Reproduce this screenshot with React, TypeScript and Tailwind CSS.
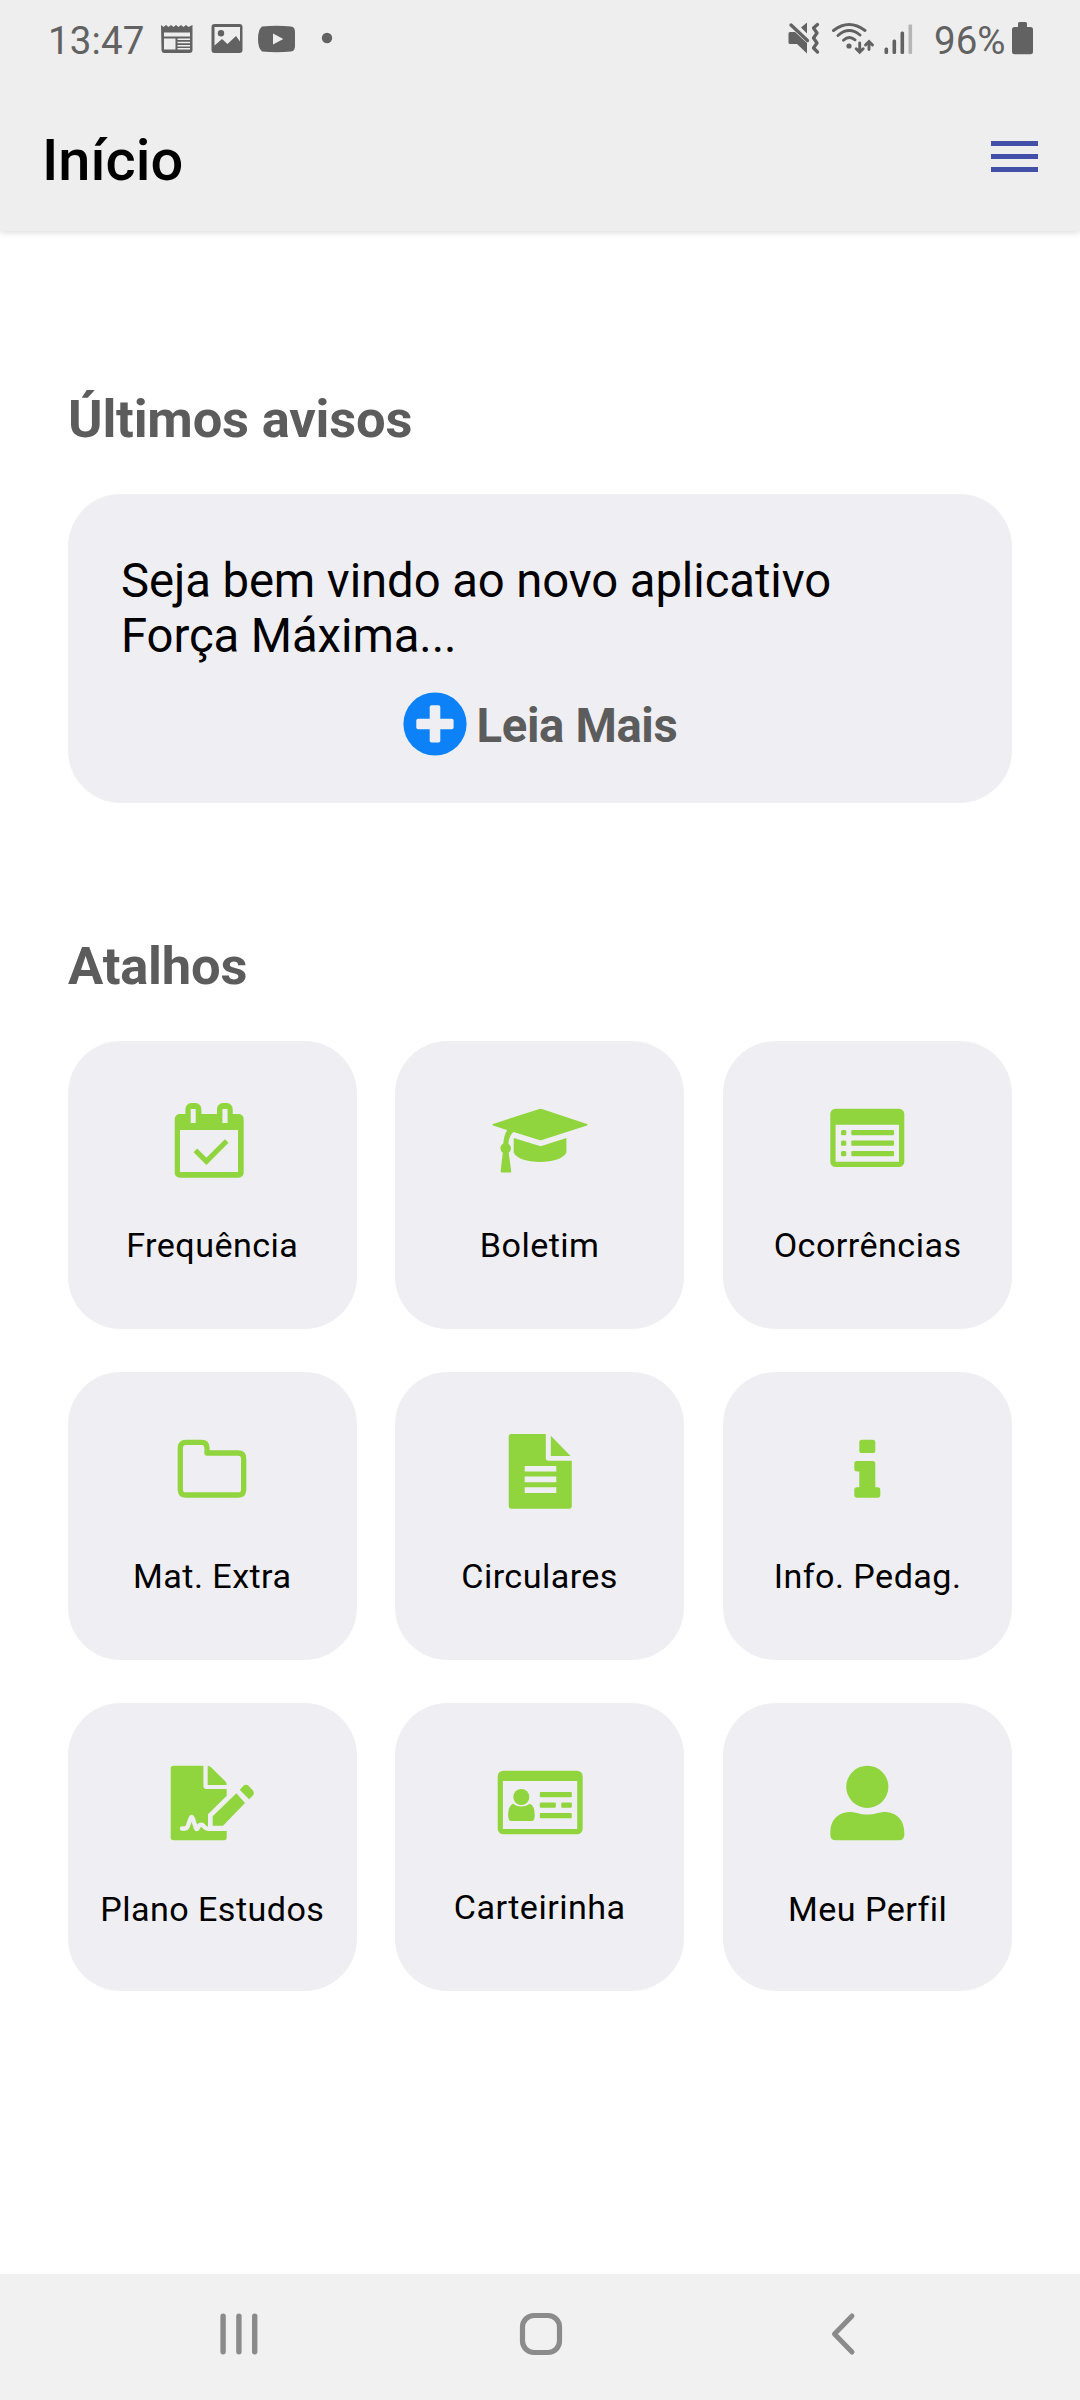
import type { ReactNode } from "react";

const shortcuts: { name: string; icon: ReactNode; low?: boolean }[] = [
  { name: "Frequência", icon: <CalendarIcon /> },
  { name: "Boletim", icon: <GraduationIcon /> },
  { name: "Ocorrências", icon: <ListIcon /> },
  { name: "Mat. Extra", icon: <FolderIcon /> },
  { name: "Circulares", icon: <FileIcon /> },
  { name: "Info. Pedag.", icon: <InfoIcon /> },
  { name: "Plano Estudos", icon: <SignatureIcon />, low: true },
  { name: "Carteirinha", icon: <IdCardIcon /> },
  { name: "Meu Perfil", icon: <UserIcon />, low: true },
];

function TileIcon({ children }: { children: ReactNode }) {
  return (
    <svg
      viewBox="0 0 100 80"
      className="h-[80px] w-[100px] shrink-0 text-[#90d43e]"
      fill="currentColor"
    >
      {children}
    </svg>
  );
}

function CalendarIcon() {
  return (
    <TileIcon>
      <path
        fillRule="evenodd"
        d="M17.7 12H23.4V7.5a6 6 0 0 1 6-6.5h4a6 6 0 0 1 6 6.5V12H55V7.5a6 6 0 0 1 6-6.5h3.7a6 6 0 0 1 6 6.5V12h6a5 5 0 0 1 5 5v53.7a5 5 0 0 1-5 5h-59a5 5 0 0 1-5-5V17a5 5 0 0 1 5-5ZM18 28v42h58V28ZM28.7 7v14h5V7ZM60.4 7v14h5.2V7Z"
      />
      <path
        d="m33.4 48.3 11 11L64.7 39"
        fill="none"
        stroke="currentColor"
        strokeWidth="5.2"
      />
    </TileIcon>
  );
}

function GraduationIcon() {
  return (
    <TileIcon>
      <path d="M3 21.9 49.3 7a5 5 0 0 1 2.6 0L97 21.9a.9.9 0 0 1 0 1.7L51.9 38a5 5 0 0 1-2.6 0L3 23.6a.9.9 0 0 1 0-1.7Z" />
      <path d="M23.7 36 50.7 44.2 76.4 36V50.5C73.5 56.5 63 60 50 60S26.5 56.5 23.7 50.5Z" />
      <path d="M17.5 27.5 24 29.5C20.5 32 18.9 36 18.5 41.7a5.4 5.4 0 0 1 .2 9L21.2 69.5q0 .9-.9.9H11.5q-.9 0-.9-.9L12.8 50.7a5.4 5.4 0 0 1 .5-9.2C13.8 36 15 31 17.5 27.5Z" />
    </TileIcon>
  );
}

function ListIcon() {
  return (
    <TileIcon>
      <path
        fillRule="evenodd"
        d="M17.5 6.7H81a5.3 5.3 0 0 1 5.3 5.3V59.7A5.3 5.3 0 0 1 81 65H17.6a5.3 5.3 0 0 1-5.3-5.3V12a5.3 5.3 0 0 1 5.2-5.3ZM17.6 22.7v37H81v-37Z"
      />
      <rect x="23" y="28" width="5.3" height="5.2" rx="1.5" />
      <rect x="23" y="38.6" width="5.3" height="5.2" rx="1.5" />
      <rect x="23" y="49.1" width="5.3" height="5.2" rx="1.5" />
      <rect x="33.3" y="28" width="42.7" height="5.2" rx="1" />
      <rect x="33.3" y="38.6" width="42.7" height="5.2" rx="1" />
      <rect x="33.3" y="49.1" width="42.7" height="5.2" rx="1" />
    </TileIcon>
  );
}

function FolderIcon() {
  return (
    <TileIcon>
      <path
        d="M23.8 9.3H39.5Q45 9.3 45 15V20H76Q81.7 20 81.7 25.7V56.4Q81.7 62 76 62H23.9Q18.3 62 18.3 56.4V15Q18.3 9.3 23.8 9.3Z"
        fill="none"
        stroke="currentColor"
        strokeWidth="5.3"
        strokeLinejoin="round"
      />
    </TileIcon>
  );
}

function FileIcon() {
  return (
    <TileIcon>
      <path
        fillRule="evenodd"
        d="M21.3 1H55.8V24.5Q55.8 27.7 59 27.7H81.8V73Q81.8 75.7 79.2 75.7H21.3Q18.7 75.7 18.7 73V3.6Q18.7 1 21.3 1ZM34.7 33v5.6H66.3V33ZM34.7 43.6v5.6H66.3v-5.6ZM34.7 54.3v5.6H66.3v-5.6Z"
      />
      <path d="M60.8 2.7 80.6 23H60.8Z" />
    </TileIcon>
  );
}

function InfoIcon() {
  return (
    <TileIcon>
      <rect x="41.3" y="6.7" width="16" height="13.3" rx="2.6" />
      <path d="M38.9 28H54.7Q57.3 28 57.3 30.6V54.3H59.7Q62.3 54.3 62.3 57V62Q62.3 64.7 59.7 64.7H38.9Q36.3 64.7 36.3 62V57Q36.3 54.3 38.9 54.3H41.3V38.4H38.9Q36.3 38.4 36.3 35.7V30.6Q36.3 28 38.9 28Z" />
    </TileIcon>
  );
}

function SignatureIcon() {
  return (
    <TileIcon>
      <path d="M11.5 1.7H41.4V21.7Q41.4 25 44.5 25H64.7V31.7L46 50.2V67H64.7V73.5Q64.7 76.3 62 76.3H11.5Q8.7 76.3 8.7 73.5V4.5Q8.7 1.7 11.5 1.7Z" />
      <path d="M45.7 1.7Q47.5 1.7 49 3.2L63.5 17.5Q64.7 18.9 64.7 21H45.7Z" />
      <path
        d="M20 64.5H23Q25.3 64.3 26.2 61L28.5 54.5Q29.7 51.5 30.8 54.5L34 64.3Q34.7 65.8 35.8 64L36.8 62Q38.5 60 40.5 61L43 63.5Q44.3 64.8 47 64.8H65"
        fill="none"
        stroke="#efeff3"
        strokeWidth="4.4"
        strokeLinecap="round"
        strokeLinejoin="round"
      />
      <path d="M74.4 29.3 83 39 61 61.7H50.7V52.3Z" />
      <path d="M77.7 25.7 81.3 22Q84 19.7 86.7 22L90.7 26.2Q93 29 90.7 31.7L87 35.2Z" />
    </TileIcon>
  );
}

function IdCardIcon() {
  return (
    <TileIcon>
      <path
        fillRule="evenodd"
        d="M13.5 6.7H87a5.7 5.7 0 0 1 5.7 5.7V64.6a5.7 5.7 0 0 1-5.7 5.7H13.4a5.7 5.7 0 0 1-5.7-5.7V12.4a5.7 5.7 0 0 1 5.8-5.7ZM12.9 17V65H87.2V17Z"
      />
      <circle cx="31.3" cy="33" r="8" />
      <path d="M23 39.7Q26.5 42.5 31.3 42.5T40 39.7Q44.7 41.5 44.7 51.5Q44.7 57 41.5 57H21.4Q18.2 57 18.2 51.5Q18.2 41.5 23 39.7Z" />
      <rect x="49.8" y="28" width="32" height="5.2" rx="1" />
      <rect x="49.8" y="38.5" width="16" height="5.2" rx="1" />
      <rect x="71.2" y="38.5" width="10.6" height="5.2" rx="1" />
      <rect x="49.8" y="49.1" width="32" height="5.2" rx="1" />
    </TileIcon>
  );
}

function UserIcon() {
  return (
    <TileIcon>
      <circle cx="49.3" cy="22.8" r="21.1" />
      <path d="M30.5 48C37 47.5 41 50.6 49.3 50.6S62 47.5 68 48C80 49 86.3 57 86.3 69V71Q86.3 76.3 80.5 76.3H18Q12.3 76.3 12.3 71V69C12.3 57 18.5 49 30.5 48Z" />
    </TileIcon>
  );
}

function StatusBar() {
  return (
    <div className="flex h-[76px] items-start justify-between pt-[18px] pr-[46px] pl-[48px] text-[38.5px] leading-[45px] text-[#626262]">
      <div className="flex">
        <span className="w-[113px] tracking-[0.1px]">13:47</span>
        <svg viewBox="0 0 180 40" className="h-[40px] w-[180px]" fill="currentColor">
          {/* news */}
          <path
            fillRule="evenodd"
            d="M0 7 2.5 9 5 7 7.5 9 10 7 12.5 9 15 7 17.5 9 20 7 22.5 9 25 7 27.5 9 31.5 7V32a3 3 0 0 1-3 3H3.5a3 3 0 0 1-3-3ZM3 14.5V18.5H29V14.5ZM3 20.5V31.5H14.5V20.5ZM16.5 20.5v1.5H29v-1.5ZM16.5 23.7v1.5H29v-1.5ZM16.5 26.9v1.5H29v-1.5ZM16.5 30.1v1.4H29v-1.4Z"
          />
          {/* gallery */}
          <path
            fillRule="evenodd"
            d="M53.5 6H78.5a3 3 0 0 1 3 3V32a3 3 0 0 1-3 3H53.5a3 3 0 0 1-3-3V9a3 3 0 0 1 3-3ZM53.5 9V27.5L61 21 66.5 26 75 18 79 23.5V9Z"
          />
          <circle cx="60" cy="15.3" r="3.2" />
          {/* youtube */}
          <path
            fillRule="evenodd"
            d="M101 8.6Q115.5 7 130 8.6Q134 9 134 14V28Q134 33 130 33.5Q115.5 35 101 33.5Q97 30 97 21T101 8.6ZM112 15.5V26.5L122.3 21Z"
          />
          <circle cx="166" cy="20" r="5.2" />
        </svg>
      </div>
      <div className="flex">
        <svg viewBox="0 0 148 40" className="h-[40px] w-[148px]" fill="currentColor">
          {/* muted, vibrating */}
          <path d="M4 14H9L21 25V35.5L11 26H4Q2.5 26 2.5 24.5V15.5Q2.5 14 4 14ZM15 9.5 21 4.5V15.5Z" />
          <path
            d="m5 7 16.5 15.5M31.5 6.5 27.5 10 31 15 27.5 20 31 25 27.5 30 31.5 34"
            fill="none"
            stroke="currentColor"
            strokeWidth="3.3"
            strokeLinecap="round"
            strokeLinejoin="round"
          />
          {/* wifi */}
          <g fill="none" stroke="currentColor" strokeWidth="2.9" strokeLinecap="round">
            <path d="M47.5 12.5Q63 .5 79 12.5M52 17.5Q63 8 74 17M57.5 22.3Q63 17 69 21.8" />
            <path d="M73.7 25V33.5M70.2 30.8 73.7 34.2 77.2 30.8M83 31.5V24M79.5 27 83 23.5 86.5 27" />
          </g>
          <circle cx="63" cy="28" r="2.6" />
          {/* signal */}
          <rect x="98.5" y="29.5" width="3.6" height="6.5" rx="1.5" />
          <rect x="106.5" y="21.5" width="3.6" height="14.5" rx="1.5" />
          <rect x="114.5" y="13.5" width="3.6" height="22.5" rx="1.5" />
          <rect x="122.5" y="6.5" width="3.6" height="29.5" rx="1" opacity="0.4" />
        </svg>
        <span className="w-[78px]">96%</span>
        <svg viewBox="0 0 22 40" className="h-[40px] w-[22px]" fill="currentColor">
          <path d="M6 9V5.5Q6 4 7.500 4H13.500Q15 4 15 5.500V9H18.500Q21 9 21 11.500V34Q21 36.300 18.500 36.300H2.500Q0 36.300 0 34V11.500Q0 9 2.500 9Z" />
        </svg>
      </div>
    </div>
  );
}

function Header() {
  return (
    <header className="h-[231px] bg-[#eeeeee] shadow-[0_1px_7px_rgba(0,0,0,0.16)]">
      <StatusBar />
      <div className="flex items-start justify-between px-[42px]">
        <h1 className="pt-[50px] text-[57.75px] leading-[68px] font-medium text-black">
          Início
        </h1>
        <div className="flex w-[47px] flex-col gap-[8px] pt-[65px]">
          <span className="h-[5px] bg-[#4350a8]" />
          <span className="h-[5px] bg-[#4350a8]" />
          <span className="h-[5px] bg-[#4350a8]" />
        </div>
      </div>
    </header>
  );
}

function Notice() {
  return (
    <div className="mt-[44px] h-[309px] rounded-[52.5px] bg-[#efeff3] px-[53px] pt-[60px]">
      <p className="text-[47.25px] leading-[55px] tracking-[-0.08px] text-black">
        Seja bem vindo ao novo aplicativo
        <br />
        Força Máxima...
      </p>
      <div className="mt-[28px] flex items-start justify-center gap-[10px]">
        <svg viewBox="0 0 64 64" className="h-[64px] w-[64px]">
          <circle cx="32" cy="32" r="31.6" fill="#0d82f8" />
          <rect x="13.3" y="26.7" width="37.3" height="10.6" rx="1.8" fill="#efeff3" />
          <rect x="26.7" y="13.3" width="10.6" height="37.3" rx="1.8" fill="#efeff3" />
        </svg>
        <span className="pt-[7px] text-[47.25px] leading-[55px] font-bold tracking-[-0.35px] text-[#5c5c5c]">
          Leia Mais
        </span>
      </div>
    </div>
  );
}

function NavBar() {
  return (
    <nav className="flex h-[126px] items-start bg-[#f1f1f1] pt-[37px] pl-[218px] text-[#8b8b8b]">
      <svg viewBox="0 0 42 46" className="h-[46px] w-[42px]" fill="currentColor">
        <rect x="2.4" y="2.5" width="5.4" height="41" rx="2.7" />
        <rect x="18.2" y="2.5" width="5.4" height="41" rx="2.7" />
        <rect x="34" y="2.5" width="5.4" height="41" rx="2.7" />
      </svg>
      <svg viewBox="0 0 46 46" className="ml-[258px] h-[46px] w-[46px]">
        <rect x="4.5" y="4.5" width="37" height="37" rx="11.5" fill="none" stroke="currentColor" strokeWidth="5.2" />
      </svg>
      <svg viewBox="0 0 34 46" className="ml-[264px] h-[46px] w-[34px]">
        <path
          d="M24 5 6.5 23 24 41"
          fill="none"
          stroke="currentColor"
          strokeWidth="5"
          strokeLinecap="round"
          strokeLinejoin="round"
        />
      </svg>
    </nav>
  );
}

export default function App() {
  return (
    <div className="flex h-[2400px] w-[1080px] flex-col bg-white font-[Roboto,sans-serif]">
      <Header />
      <main className="flex-1 px-[68px] pt-[157px]">
        <h2 className="text-[52.5px] leading-[62px] font-bold tracking-[-0.2px] text-[#5c5c5c]">
          Últimos avisos
        </h2>
        <Notice />
        <h2 className="mt-[132px] text-[52.5px] leading-[62px] font-bold tracking-[-0.2px] text-[#5c5c5c]">
          Atalhos
        </h2>
        <div className="mt-[44px] grid grid-cols-[327.3px_328px_288.7px] gap-y-[42.6px]">
          {shortcuts.map((item) => (
            <div
              key={item.name}
              className="flex h-[288.4px] w-[288.6px] flex-col items-center rounded-[52.5px] bg-[#efeff3] pt-[61px]"
            >
              {item.icon}
              <span
                className={`text-[34.125px] leading-[40px] tracking-[0.45px] whitespace-nowrap text-black ${
                  item.low ? "mt-[45px]" : "mt-[43px]"
                }`}
              >
                {item.name}
              </span>
            </div>
          ))}
        </div>
      </main>
      <NavBar />
    </div>
  );
}
